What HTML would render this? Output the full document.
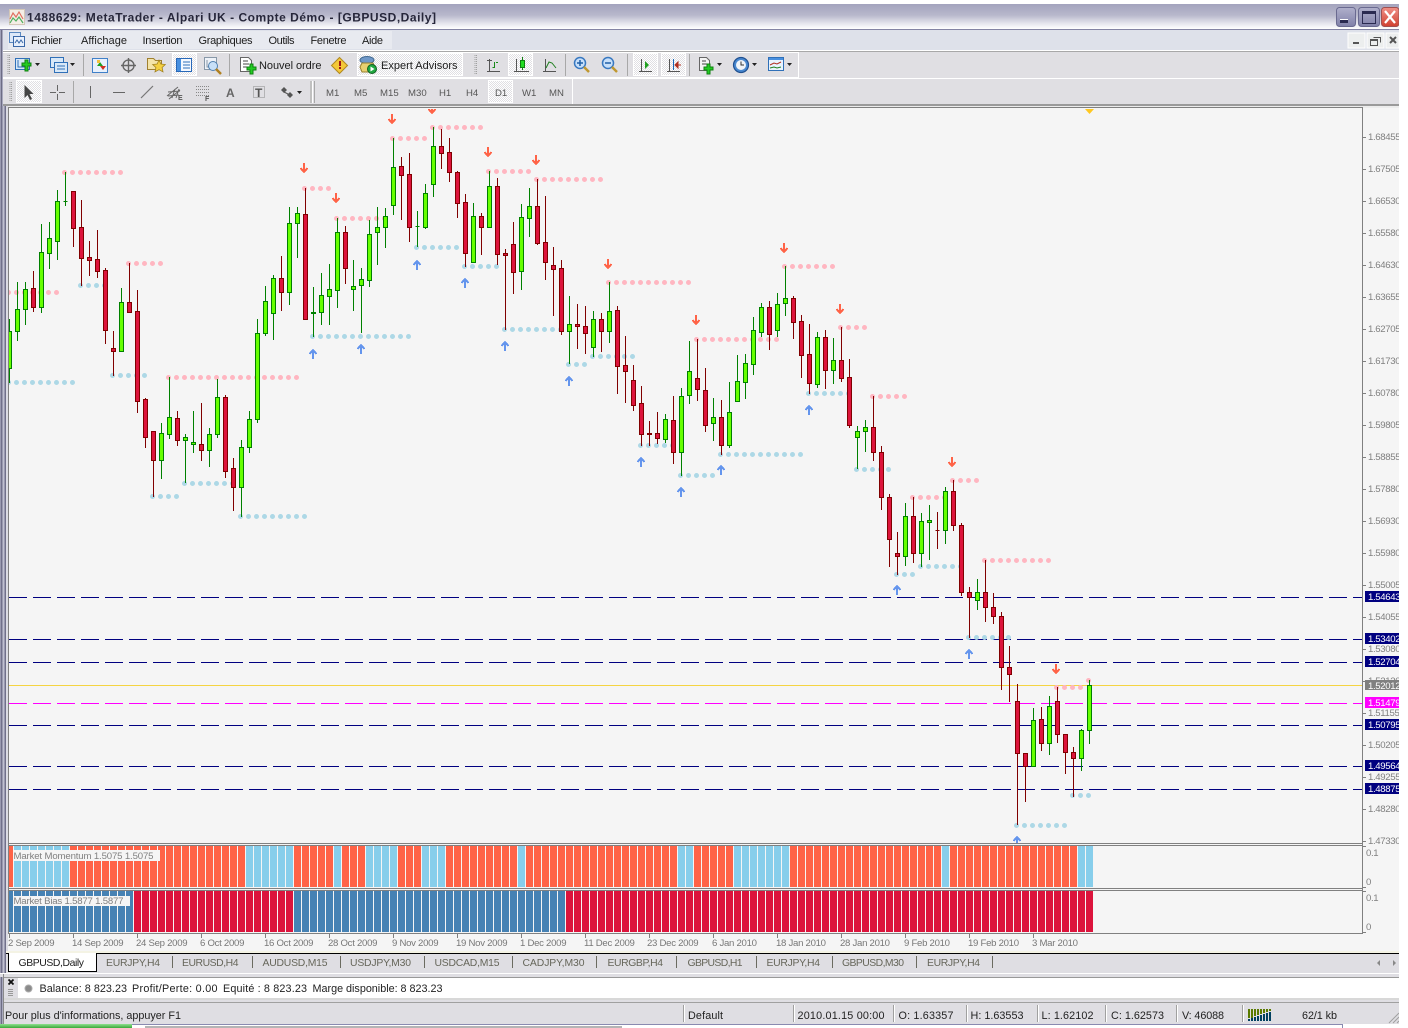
<!DOCTYPE html>
<html><head><meta charset="utf-8"><title>MetaTrader</title>
<style>
html,body{margin:0;padding:0;background:#fff;width:1408px;height:1028px;overflow:hidden}
svg{display:block;position:absolute;left:0;top:0}
text{font-family:"Liberation Sans",sans-serif;font-size:11px;fill:#1c1c1c;white-space:pre}
.ax{font-size:9.6px;fill:#808080;letter-spacing:-.35px}
.bx{font-size:9.6px;fill:#fff;letter-spacing:-.35px}
.dt{font-size:9.6px;fill:#777;letter-spacing:-.28px}
.tf{font-size:9.6px;fill:#555}
.tb{fill:#66665a;font-size:10.4px}
.st{font-size:10.8px;fill:#222}
.lb{font-size:9.6px;fill:#808080}
.ce{shape-rendering:crispEdges}
</style></head><body>
<svg width="1408" height="1028" viewBox="0 0 1408 1028" xmlns="http://www.w3.org/2000/svg">
<defs>
<linearGradient id="tg" x1="0" y1="0" x2="0" y2="1"><stop offset="0" stop-color="#a3a3bd"/><stop offset=".45" stop-color="#b8b8cc"/><stop offset=".8" stop-color="#e8e8ef"/><stop offset="1" stop-color="#fff"/></linearGradient>
<linearGradient id="bg" x1="0" y1="0" x2="0" y2="1"><stop offset="0" stop-color="#b0b0cc"/><stop offset="1" stop-color="#8080a8"/></linearGradient>
<linearGradient id="rg" x1="0" y1="0" x2="0" y2="1"><stop offset="0" stop-color="#f09088"/><stop offset="1" stop-color="#d04030"/></linearGradient>
<linearGradient id="gg" x1="0" y1="0" x2="0" y2="1"><stop offset="0" stop-color="#8fe08f"/><stop offset="1" stop-color="#3aa83a"/></linearGradient>
<pattern id="dp" width="2" height="2" patternUnits="userSpaceOnUse"><rect width="2" height="2" fill="#fff"/><rect width="1" height="1" fill="#e0dfe3"/><rect x="1" y="1" width="1" height="1" fill="#e0dfe3"/></pattern>
<clipPath id="cc"><rect x="9" y="109" width="1353" height="734"/></clipPath>
<clipPath id="c1"><rect x="9" y="846" width="1353" height="41"/></clipPath>
<clipPath id="c2"><rect x="9" y="891" width="1353" height="41"/></clipPath>
<clipPath id="ca"><rect x="1363" y="108" width="36" height="826"/></clipPath>
</defs>

<g class="ce">
<rect x="0" y="4" width="1399" height="1020" fill="#e0dfe3"/>
<rect x="0" y="4" width="1399" height="25" fill="url(#tg)"/>
<rect x="0" y="29" width="1399" height="1" fill="#8484a4"/>
<rect x="0" y="30" width="1399" height="20" fill="#dee1ea"/>
<rect x="8" y="31" width="384" height="18" fill="#e8eaf0"/>
<rect x="0" y="50" width="1399" height="1" fill="#fff"/>
<rect x="0" y="51" width="1399" height="1" fill="#a8a8a8"/>
<rect x="3" y="52" width="796" height="1" fill="#fff"/>
<rect x="3" y="77" width="796" height="1" fill="#fff"/>
<rect x="798" y="52" width="1" height="26" fill="#fff"/>
<rect x="0" y="78" width="1399" height="1" fill="#fff"/>
<rect x="572" y="79" width="1" height="25" fill="#fff"/>
<rect x="0" y="104" width="1399" height="2" fill="#9a9a9a"/>
<rect x="0" y="106" width="1399" height="2" fill="#ececec"/>
<rect x="0" y="30" width="1" height="994" fill="#a0a0b8"/>
<rect x="1" y="30" width="1" height="994" fill="#6d6d85"/>
<rect x="2" y="30" width="1" height="994" fill="#a8a8be"/>
<rect x="0" y="106" width="6" height="868" fill="#9a9ab0"/>
<rect x="1" y="106" width="1" height="868" fill="#70708a"/>
<rect x="3" y="106" width="1" height="868" fill="#c0c0d0"/>
<rect x="5" y="106" width="1" height="868" fill="#70708a"/>
<rect x="6" y="106" width="2" height="846" fill="#dcdce4"/>
<rect x="8" y="108" width="1391" height="843" fill="#f5f5f5"/>
<rect x="8" y="107" width="1355" height="1" fill="#808080"/>
<rect x="8" y="107" width="1" height="826" fill="#808080"/>
<rect x="1362" y="107" width="1" height="826" fill="#808080"/>
<rect x="8" y="843" width="1355" height="1" fill="#808080"/>
<rect x="8" y="845" width="1355" height="1" fill="#808080"/>
<rect x="8" y="888" width="1355" height="1" fill="#808080"/>
<rect x="8" y="890" width="1355" height="1" fill="#808080"/>
<rect x="8" y="933" width="1355" height="1" fill="#808080"/>
<rect x="6" y="951" width="1393" height="2" fill="#f4f3e4"/>
<rect x="6" y="953" width="1393" height="1" fill="#000"/>
<rect x="6" y="954" width="1393" height="19" fill="#dfdee3"/>
<rect x="0" y="973" width="1399" height="1" fill="#fff"/>
<rect x="0" y="974" width="1399" height="3" fill="#dfdee3"/>
<rect x="3" y="977" width="1396" height="1" fill="#999"/>
<rect x="3" y="978" width="15" height="20" fill="#dfdee3"/>
<rect x="18" y="978" width="1381" height="20" fill="#fff"/>
<rect x="3" y="998" width="1396" height="2" fill="#d8d8d8"/>
<rect x="3" y="1000" width="1396" height="3" fill="#dfdee3"/>
<rect x="3" y="1002" width="1396" height="1" fill="#a0a0a0"/>
<rect x="3" y="1003" width="1396" height="21" fill="#dfdee3"/>
<rect x="3" y="974" width="1" height="50" fill="#8a8a8a"/>
<rect x="0" y="1024" width="1408" height="4" fill="#fff"/>
<rect x="132" y="1024" width="1210" height="1" fill="#8a8ab0"/>
<rect x="0" y="1024" width="132" height="4" fill="url(#gg)"/>
<rect x="145" y="1026" width="477" height="2" fill="#b4b4b4"/>
<rect x="1342" y="1024" width="1" height="4" fill="#8a8ab0"/>
</g>

<!-- Title -->
<g>
<rect x="9.500" y="9.500" width="15" height="15" fill="#f4eee6" stroke="#d4c8b8"/>
<path d="M10 19l3-6 3 4 3-5 4 7" fill="none" stroke="#e07060" stroke-width="1.200"/>
<path d="M10 23l3-5 3 3 3-4 4 6" fill="none" stroke="#50b060" stroke-width="1.200"/>
<text x="27" y="21.500" textLength="409" style="font-size:12px;font-weight:bold;fill:#26263a">1488629: MetaTrader - Alpari UK - Compte Démo - [GBPUSD,Daily]</text>
<rect x="1336.500" y="7.500" width="19" height="19" rx="3" fill="url(#bg)" stroke="#6a6a90"/>
<rect x="1340" y="20" width="8" height="3" fill="#2a2a50"/><rect x="1340" y="19" width="8" height="1" fill="#fff"/>
<rect x="1358.500" y="7.500" width="21" height="19" rx="3" fill="url(#bg)" stroke="#6a6a90"/>
<rect x="1362.500" y="11.500" width="13" height="12" fill="none" stroke="#2a2a50"/><rect x="1363" y="12" width="12" height="2" fill="#2a2a50"/>
<rect x="1381.500" y="7.500" width="17.500" height="19" rx="3" fill="url(#rg)" stroke="#a05050"/>
<path d="M1385 11l10 12M1395 11l-10 12" stroke="#fff" stroke-width="2.2" fill="none"/>
</g>

<!-- Menu -->
<g>
<rect x="9.500" y="32.500" width="11" height="10" fill="#dce8f8" stroke="#5a88c0"/>
<rect x="13.500" y="36.500" width="11" height="10" fill="#e8f0fc" stroke="#3a68a8"/>
<path d="M15 43l2-3 2 3 2-3 2 3" fill="none" stroke="#3a68a8"/>
<text x="31" y="44" textLength="31">Fichier</text>
<text x="81" y="44" textLength="46">Affichage</text>
<text x="142.500" y="44" textLength="40">Insertion</text>
<text x="198.500" y="44" textLength="54">Graphiques</text>
<text x="268.500" y="44" textLength="26">Outils</text>
<text x="310.500" y="44" textLength="36">Fenetre</text>
<text x="362" y="44" textLength="21">Aide</text>
<rect x="1348" y="33" width="17" height="15" fill="#eceeee" stroke="#fff" class="ce"/>
<rect x="1353" y="42" width="6" height="2" fill="#555" class="ce"/>
<rect x="1367" y="33" width="17" height="15" fill="#eceeee" stroke="#fff" class="ce"/>
<path d="M1373.500 37.500h7v5M1370.500 39.500h7v6h-7z" fill="none" stroke="#555" class="ce"/><rect x="1371" y="39" width="7" height="2" fill="#555" class="ce"/>
<rect x="1386" y="33" width="13" height="15" fill="#eceeee" stroke="#fff" class="ce"/>
<path d="M1390 37l6 6M1396 37l-6 6" stroke="#555" stroke-width="2" fill="none"/>
</g>

<!-- Toolbar 1 -->
<g>
<path d="M8 55v20M9.500 55v20" stroke="#a0a0a0" stroke-dasharray="1 1" fill="none" class="ce"/>
<rect x="15.500" y="58.500" width="14" height="11" fill="#d8e8f8" stroke="#3070b8"/><path d="M18 60v7h9" fill="none" stroke="#3070b8"/>
<path d="M25 61h3v-3h3v3h3v3h-3v5h-3v-5h-3z" fill="#22cc22" stroke="#108010" transform="translate(-3,2)"/>
<path d="M35 63h5l-2.500 3z" fill="#222"/>
<rect x="50.500" y="57.500" width="13" height="10" fill="#d8e8f8" stroke="#3070b8"/><rect x="54.500" y="62.500" width="13" height="10" fill="#d8e8f8" stroke="#3070b8"/><path d="M57 66h8M57 69h8" stroke="#3070b8"/>
<path d="M70 63h5l-2.500 3z" fill="#222"/>
<rect x="83" y="54" width="1" height="22" fill="#a8a8a8" class="ce"/>
<rect x="92.500" y="58.500" width="15" height="14" fill="#e8f0fc" stroke="#4080c8"/><path d="M97 66l3-4 3 4z" fill="#20a020"/><path d="M100 70l3-4h-6z" fill="#d03020" transform="translate(3,0)"/><rect x="97" y="60" width="3" height="3" fill="#f0c040"/>
<circle cx="128.500" cy="65.500" r="5.500" fill="none" stroke="#666" stroke-width="1.400"/><path d="M128.500 58v15M121 65.500h15" stroke="#666" stroke-width="1.400"/>
<path d="M147.500 58.500h6l2 2h6v9h-14z" fill="#f4e4a8" stroke="#a08030"/>
<path d="M159 60l1.900 4 4.400.5-3.200 3 .9 4.400-4-2.200-4 2.200.9-4.400-3.200-3 4.400-.5z" fill="#f4d040" stroke="#a08020" stroke-width=".8"/>
<rect x="172.500" y="53.500" width="24" height="22" fill="url(#dp)" stroke="#fff"/>
<rect x="176.500" y="58.500" width="15" height="13" fill="#f4f8ff" stroke="#2868b8"/><rect x="177" y="59" width="4" height="12" fill="#4890e0"/><path d="M183 62h7M183 65h7M183 68h7" stroke="#3070b8"/>
<rect x="204.500" y="57.500" width="12" height="12" fill="#eef2f8" stroke="#8898a8"/><path d="M207 60v7h7" fill="none" stroke="#8898a8"/><circle cx="213" cy="66" r="4.500" fill="#c8e0f8" stroke="#5080b0"/><path d="M216 69l5 5" stroke="#b08020" stroke-width="2.500"/>
<rect x="229" y="54" width="1" height="22" fill="#a8a8a8" class="ce"/>
<path d="M240.500 57.500h8l3 3v11h-11z" fill="#fff" stroke="#666"/><path d="M243 61h5M243 64h6M243 67h6" stroke="#444"/>
<path d="M247 67h3v-3h3v3h3v3h-3v4h-3v-4h-3z" fill="#22cc22" stroke="#108010"/>
<text x="259" y="69" textLength="62.500">Nouvel ordre</text>
<path d="M339.500 57.500l8 8-8 8-8-8z" fill="#f4c838" stroke="#b08820"/><rect x="339" y="61" width="2" height="5" fill="#a01818"/><rect x="339" y="67" width="2" height="2" fill="#a01818"/>
<rect x="357.500" y="53.500" width="105" height="22" fill="url(#dp)" stroke="#fff"/>
<ellipse cx="367" cy="60" rx="7" ry="3.500" fill="#7098c8" stroke="#406890"/><path d="M362 63h11l2 4-2 5h-11l-2-5z" fill="#e8d070" stroke="#988030"/>
<circle cx="372" cy="69" r="4.500" fill="#20a840" stroke="#106020"/><path d="M370.500 66.500l4 2.500-4 2.500z" fill="#fff"/>
<text x="381" y="69" textLength="76.500">Expert Advisors</text>
<path d="M475 55v20M476.500 55v20" stroke="#a0a0a0" stroke-dasharray="1 1" fill="none" class="ce"/>
<path d="M487 71.500h13M489.500 59v13" stroke="#555" fill="none"/><path d="M487 60.500h5" stroke="#555"/><path d="M494.500 62v6M496 62.500h2M492.500 67.500h2" stroke="#1a8a1a" fill="none"/><path d="M498 71l2 .5-2 .5z" fill="#555"/>
<rect x="508.500" y="53.500" width="24" height="22" fill="url(#dp)" stroke="#fff"/>
<path d="M514 71.500h15M516.500 59v13" stroke="#555" fill="none"/>
<path d="M522.500 57v13" stroke="#108010"/><rect x="520.500" y="60.500" width="4" height="7" fill="#22dd22" stroke="#108010"/>
<path d="M543 71.500h13M545.500 59v13" stroke="#555" fill="none"/><path d="M546 68l3-6 3 1 4 5" fill="none" stroke="#208020"/>
<rect x="565" y="54" width="1" height="22" fill="#a8a8a8" class="ce"/>
<circle cx="580" cy="63" r="5.500" fill="#c8e0fa" stroke="#3878c0" stroke-width="1.500"/><path d="M577 63h6M580 60v6" stroke="#2060a8" stroke-width="1.500"/><path d="M584 67l5 5" stroke="#c09830" stroke-width="2.500"/>
<circle cx="608" cy="63" r="5.500" fill="#c8e0fa" stroke="#3878c0" stroke-width="1.500"/><path d="M605 63h6" stroke="#2060a8" stroke-width="1.500"/><path d="M612 67l5 5" stroke="#c09830" stroke-width="2.500"/>
<rect x="627" y="54" width="1" height="22" fill="#a8a8a8" class="ce"/>
<rect x="633.500" y="53.500" width="24" height="22" fill="url(#dp)" stroke="#fff"/>
<path d="M639 71.500h13M641.500 59v13" stroke="#555" fill="none"/><path d="M645 61l4 4-4 4z" fill="#20a020"/>
<rect x="661.500" y="53.500" width="24" height="22" fill="url(#dp)" stroke="#fff"/>
<path d="M667 71.500h13M669.500 59v13" stroke="#555" fill="none"/><path d="M673.500 59v11" stroke="#1868b8" fill="none"/><path d="M681 65h-5M678 62l-3 3 3 3z" fill="#b03020" stroke="#b03020"/>
<rect x="689" y="54" width="1" height="22" fill="#a8a8a8" class="ce"/>
<path d="M699.500 57.500h7l3 3v10h-10z" fill="#f4f4f4" stroke="#666"/><path d="M702 61h4M702 64h5" stroke="#444"/>
<path d="M704 67h3v-3h3v3h3v3h-3v4h-3v-4h-3z" fill="#22cc22" stroke="#108010"/>
<path d="M717 63h5l-2.500 3z" fill="#222"/>
<circle cx="741" cy="65" r="7.500" fill="#4888d0" stroke="#205090" stroke-width="1.200"/><circle cx="741" cy="65" r="5" fill="#f0f4f8"/><path d="M741 61.500V65h3" stroke="#333" fill="none"/>
<path d="M752 63h5l-2.500 3z" fill="#222"/>
<rect x="768.500" y="57.500" width="15" height="13" fill="#e8f4ff" stroke="#3070b8"/><rect x="769" y="58" width="14" height="2" fill="#4890e0"/><path d="M770 65l4-2 3 1 4-2" stroke="#b03020" fill="none"/><path d="M770 68l4-1 3 1 4-1" stroke="#208020" fill="none"/>
<path d="M787 63h5l-2.500 3z" fill="#222"/>
</g>

<!-- Toolbar 2 -->
<g>
<path d="M10 82v20M11.500 82v20" stroke="#a0a0a0" stroke-dasharray="1 1" fill="none" class="ce"/>
<rect x="16.500" y="80.500" width="25" height="22" fill="url(#dp)" stroke="#fff"/>
<path d="M24.500 85v13l3-3 2.500 5 2-1-2.500-5h4z" fill="#444"/>
<path d="M57.500 85v6M57.500 94v6M50 92.500h6M59 92.500h6" stroke="#666" class="ce"/>
<rect x="73" y="81" width="1" height="22" fill="#a8a8a8" class="ce"/>
<path d="M90.500 86v12" stroke="#666" class="ce"/>
<path d="M113 92.500h12" stroke="#666" class="ce"/>
<path d="M141 98l12-12" stroke="#777" stroke-width="1.200"/>
<path d="M167 96l11-9M169 99l11-9M172 98l3-9M176 98l3-9M168 92l12-1M168 96l11-1" stroke="#666" fill="none"/>
<text x="178" y="100" style="font-size:7px;font-weight:bold;fill:#555">E</text>
<path d="M196 86.500h13M196 89.500h13M196 92.500h13M196 95.500h13" stroke="#888" stroke-dasharray="1 1" class="ce"/>
<text x="205" y="101" style="font-size:7px;font-weight:bold;fill:#555">F</text>
<text x="226" y="97" style="font-size:12px;font-weight:bold;fill:#666">A</text>
<rect x="253.500" y="86.500" width="11" height="11" fill="none" stroke="#888" stroke-dasharray="1 1" class="ce"/>
<text x="255" y="97" style="font-size:12px;font-weight:bold;fill:#555">T</text>
<path d="M284 87l3 3-3 3-3-3z" fill="#555"/><path d="M290 92l3 3-3 3-3-3z" fill="#555"/><path d="M284 92l6 3" stroke="#555"/>
<path d="M297 91h5l-2.500 3z" fill="#222"/>
<rect x="310" y="81" width="2" height="22" fill="#c0c0c0" class="ce"/><rect x="312" y="81" width="1" height="22" fill="#fff" class="ce"/><rect x="314" y="81" width="1" height="22" fill="#a8a8a8" class="ce"/>
<text class="tf" x="326" y="96">M1</text><text class="tf" x="354" y="96">M5</text><text class="tf" x="380" y="96">M15</text><text class="tf" x="408" y="96">M30</text><text class="tf" x="439" y="96">H1</text><text class="tf" x="466" y="96">H4</text>
<rect x="488.500" y="80.500" width="24" height="22" fill="url(#dp)" stroke="#fff"/>
<text class="tf" x="495" y="96">D1</text><text class="tf" x="522" y="96">W1</text><text class="tf" x="549" y="96">MN</text>
</g>

<!-- Chart -->
<g clip-path="url(#cc)">
<g class="ce" fill="none" stroke-width="1">
<path d="M9 597.500H1362M9 639.500H1362M9 662.500H1362M9 725.500H1362M9 766.500H1362M9 789.500H1362" stroke="#000080" stroke-dasharray="18 6"/>
<path d="M9 703.500H1362" stroke="#ff00ff" stroke-dasharray="18 6"/>
</g>
<path class="ce" d="M9 685.500H1362" stroke="#f5d442" fill="none"/>
<g fill="none" stroke-width="5" stroke-linecap="round" stroke-dasharray="0 8">
<path stroke="#ffb6c1" d="M8.500 292.500H57M64.500 172.500H121M128.500 263.500H161M168.500 377.500H297M304.500 188.500H329M336.500 218.500H385M392.500 138.500H425M432.500 127.500H481M488.500 171.500H529M536.500 179.500H601M608.500 282.500H689M696.500 339.500H777M784.500 266.500H833M840.500 327.500H865M872.500 396.500H905M912.500 497.500H945M952.500 480.500H977M984.500 560.500H1049M1056.500 687.500H1081M1088.500 680.500h.1"/>
<path stroke="#add8e6" d="M8.500 382.500H73M80.500 285.500H105M112.500 375.500H145M152.500 496.500H177M184.500 483.500H233M240.500 516.500H305M312.500 336.500H409M416.500 247.500H457M464.500 266.500H497M504.500 329.500H561M568.500 364.500H585M592.500 356.500H633M640.500 445.500H673M680.500 475.500H713M720.500 454.500H801M808.500 393.500H849M856.500 469.500H889M896.500 574.500H913M920.500 566.500H961M968.500 637.500H1009M1016.500 825.500H1065M1072.500 795.500H1089"/>
</g>
<g class="ce" fill="none">
<path stroke="#008000" d="M9.500 319V383M17.500 282V341M25.500 282V325M41.500 224V313M49.500 222V269M57.500 190V260M65.500 172V206M121.500 288V351M161.500 423V479M169.500 377V439M185.500 434V483M193.500 411V453M209.500 428V467M217.500 379V438M241.500 440V517M249.500 411V453M257.500 319V423M265.500 286V336M273.500 275V340M289.500 207V305M297.500 207V258M313.500 287V337M321.500 273V325M329.500 264V325M337.500 218V308M353.500 260V311M361.500 268V333M369.500 220V287M377.500 207V265M385.500 208V248M393.500 138V215M417.500 211V247M425.500 184V229M433.500 127V197M473.500 203V262M489.500 171V228M521.500 204V290M529.500 188V237M569.500 296V364M593.500 311V357M609.500 282V343M665.500 414V443M681.500 388V476M689.500 341V404M713.500 398V441M729.500 382V448M737.500 355V401M745.500 354V399M753.500 317V375M761.500 303V337M777.500 293V337M785.500 266V316M817.500 332V388M833.500 338V384M857.500 426V469M865.500 420V452M905.500 503V566M921.500 513V567M929.500 505V560M945.500 487V544M977.500 579V610M1033.500 708V767M1049.500 696V755M1081.500 729V771M1089.500 680V744"/>
<path stroke="#800000" d="M33.500 271V312M73.500 191V247M81.500 200V286M89.500 241V276M97.500 230V278M105.500 268V344M113.500 331V376M129.500 263V312M137.500 290V413M145.500 398V448M153.500 431V497M177.500 411V446M201.500 403V461M225.500 395V478M233.500 458V511M281.500 256V311M305.500 188V320M345.500 226V284M401.500 157V220M409.500 153V242M441.500 129V169M449.500 138V182M457.500 171V218M465.500 194V267M481.500 213V255M497.500 178V265M505.500 249V330M513.500 222V294M537.500 179V245M545.500 196V280M553.500 247V316M561.500 260V335M577.500 304V349M585.500 306V354M601.500 313V352M617.500 306V394M625.500 336V403M633.500 365V411M641.500 386V446M649.500 421V446M657.500 412V444M673.500 396V464M697.500 339V401M705.500 368V432M721.500 400V455M769.500 301V350M793.500 296V339M801.500 315V378M809.500 324V394M825.500 330V389M841.500 327V382M849.500 359V428M873.500 396V461M881.500 446V510M889.500 494V567M897.500 532V575M913.500 497V563M937.500 512V549M953.500 480V531M961.500 523V596M969.500 587V638M985.500 560V622M993.500 593V624M1001.500 612V690M1009.500 646V702M1017.500 684V825M1025.500 753V802M1041.500 707V751M1057.500 687V743M1065.500 734V774M1073.500 747V797"/>
<path stroke="#008000" fill="#66ff00" d="M7.500 331.500h4v37h-4zM15.500 309.500h4v22h-4zM23.500 289.500h4v20h-4zM39.500 252.500h4v55h-4zM47.500 238.500h4v15h-4zM55.500 201.500h4v40h-4zM63.500 201.500h4zM119.500 302.500h4v49h-4zM159.500 433.500h4v27h-4zM167.500 417.500h4v17h-4zM183.500 437.500h4v3h-4zM191.500 442.500h4v2h-4zM207.500 434.500h4v16h-4zM215.500 397.500h4v37h-4zM239.500 447.500h4v40h-4zM247.500 419.500h4v28h-4zM255.500 333.500h4v86h-4zM263.500 301.500h4v32h-4zM271.500 278.500h4v35h-4zM287.500 223.500h4v69h-4zM295.500 213.500h4v10h-4zM311.500 312.500h4v1h-4zM319.500 295.500h4v17h-4zM327.500 289.500h4v7h-4zM335.500 232.500h4v58h-4zM351.500 286.500h4v3h-4zM359.500 279.500h4v6h-4zM367.500 234.500h4v46h-4zM375.500 227.500h4v5h-4zM383.500 216.500h4v11h-4zM391.500 167.500h4v38h-4zM415.500 226.500h4zM423.500 193.500h4v34h-4zM431.500 146.500h4v38h-4zM471.500 216.500h4v46h-4zM487.500 186.500h4v41h-4zM519.500 217.500h4v54h-4zM527.500 206.500h4v12h-4zM567.500 324.500h4v7h-4zM591.500 319.500h4v28h-4zM607.500 311.500h4v20h-4zM663.500 419.500h4v20h-4zM679.500 396.500h4v56h-4zM687.500 371.500h4v24h-4zM711.500 417.500h4v6h-4zM727.500 412.500h4v33h-4zM735.500 381.500h4v20h-4zM743.500 363.500h4v19h-4zM751.500 330.500h4v34h-4zM759.500 307.500h4v25h-4zM775.500 304.500h4v26h-4zM783.500 298.500h4v5h-4zM815.500 337.500h4v47h-4zM831.500 360.500h4v10h-4zM855.500 431.500h4v6h-4zM863.500 427.500h4v4h-4zM903.500 516.500h4v40h-4zM919.500 521.500h4v32h-4zM927.500 520.500h4v2h-4zM943.500 491.500h4v39h-4zM975.500 592.500h4v8h-4zM1031.500 720.500h4v46h-4zM1047.500 706.500h4v37h-4zM1079.500 730.500h4v28h-4zM1087.500 685.500h4v45h-4z"/>
<path stroke="#800000" fill="#dc143c" d="M31.500 288.500h4v19h-4zM71.500 191.500h4v37h-4zM79.500 227.500h4v31h-4zM87.500 257.500h4v3h-4zM95.500 259.500h4v12h-4zM103.500 270.500h4v60h-4zM111.500 348.500h4v3h-4zM127.500 302.500h4v10h-4zM135.500 311.500h4v90h-4zM143.500 399.500h4v38h-4zM151.500 431.500h4v29h-4zM175.500 418.500h4v22h-4zM199.500 444.500h4v6h-4zM223.500 397.500h4v74h-4zM231.500 468.500h4v19h-4zM279.500 278.500h4v14h-4zM303.500 214.500h4v105h-4zM343.500 232.500h4v36h-4zM399.500 166.500h4v9h-4zM407.500 174.500h4v53h-4zM439.500 146.500h4v7h-4zM447.500 152.500h4v20h-4zM455.500 172.500h4v31h-4zM463.500 202.500h4v51h-4zM479.500 216.500h4v11h-4zM495.500 186.500h4v68h-4zM503.500 253.500h4v2h-4zM511.500 244.500h4v28h-4zM535.500 206.500h4v37h-4zM543.500 242.500h4v20h-4zM551.500 265.500h4v4h-4zM559.500 268.500h4v63h-4zM575.500 324.500h4v2h-4zM583.500 326.500h4v7h-4zM599.500 319.500h4v12h-4zM615.500 310.500h4v56h-4zM623.500 365.500h4v6h-4zM631.500 380.500h4v25h-4zM639.500 403.500h4v31h-4zM647.500 433.500h4v1h-4zM655.500 433.500h4v5h-4zM671.500 420.500h4v32h-4zM695.500 378.500h4v11h-4zM703.500 390.500h4v35h-4zM719.500 417.500h4v28h-4zM767.500 307.500h4v27h-4zM791.500 298.500h4v24h-4zM799.500 321.500h4v34h-4zM807.500 354.500h4v29h-4zM823.500 337.500h4v33h-4zM839.500 360.500h4v18h-4zM847.500 377.500h4v48h-4zM871.500 427.500h4v25h-4zM879.500 452.500h4v45h-4zM887.500 497.500h4v42h-4zM895.500 553.500h4v3h-4zM911.500 516.500h4v37h-4zM935.500 530.500h4zM951.500 491.500h4v34h-4zM959.500 525.500h4v67h-4zM967.500 592.500h4v5h-4zM983.500 592.500h4v15h-4zM991.500 607.500h4v9h-4zM999.500 616.500h4v51h-4zM1007.500 667.500h4v7h-4zM1015.500 701.500h4v52h-4zM1023.500 753.500h4v13h-4zM1039.500 719.500h4v24h-4zM1055.500 701.500h4v33h-4zM1063.500 734.500h4v18h-4zM1071.500 752.500h4v6h-4z"/>
</g>
<g class="ce" fill="none" stroke-width="2">
<path stroke="#ff6347" d="M304 163v8M300.500 168l3.500 4 3.500-4M336 193v8M332.500 198l3.500 4 3.500-4M392 114v8M388.500 119l3.500 4 3.500-4M432 104v8M428.500 109l3.500 4 3.500-4M488 147v8M484.500 152l3.500 4 3.500-4M536 155v8M532.500 160l3.500 4 3.500-4M608 259v8M604.500 264l3.500 4 3.500-4M696 315v8M692.500 320l3.500 4 3.500-4M784 243v8M780.500 248l3.500 4 3.500-4M840 304v8M836.500 309l3.500 4 3.500-4M952 457v8M948.500 462l3.500 4 3.500-4M1056 664v8M1052.500 669l3.500 4 3.500-4"/>
<path stroke="#6495ed" d="M313 351v8M309.500 354l3.500-4 3.500 4M361 346v8M357.500 349l3.500-4 3.500 4M417 262v8M413.500 265l3.500-4 3.500 4M465 280v8M461.500 283l3.500-4 3.500 4M505 343v8M501.500 346l3.500-4 3.500 4M569 378v8M565.500 381l3.500-4 3.500 4M641 459v8M637.500 462l3.500-4 3.500 4M681 489v8M677.500 492l3.500-4 3.500 4M721 467v8M717.500 470l3.500-4 3.500 4M809 407v8M805.500 410l3.500-4 3.500 4M897 587v8M893.500 590l3.500-4 3.500 4M969 651v8M965.500 654l3.500-4 3.500 4M1017 838v8M1013.500 841l3.500-4 3.500 4"/>
</g>
<path d="M1085 109h9l-4.500 5z" fill="#ffc820"/>
</g>

<!-- Right axis -->
<g clip-path="url(#ca)">
<path class="ce" stroke="#808080" fill="none" d="M1363 137.500h3M1363 169.500h3M1363 201.500h3M1363 233.500h3M1363 265.500h3M1363 297.500h3M1363 329.500h3M1363 361.500h3M1363 393.500h3M1363 425.500h3M1363 457.500h3M1363 489.500h3M1363 521.500h3M1363 553.500h3M1363 585.500h3M1363 617.500h3M1363 649.500h3M1363 681.500h3M1363 713.500h3M1363 745.500h3M1363 777.500h3M1363 809.500h3M1363 841.500h3"/>
<text class="ax" x="1368" y="140">1.68455</text><text class="ax" x="1368" y="172">1.67505</text><text class="ax" x="1368" y="204">1.66530</text><text class="ax" x="1368" y="236">1.65580</text><text class="ax" x="1368" y="268">1.64630</text><text class="ax" x="1368" y="300">1.63655</text><text class="ax" x="1368" y="332">1.62705</text><text class="ax" x="1368" y="364">1.61730</text><text class="ax" x="1368" y="396">1.60780</text><text class="ax" x="1368" y="428">1.59805</text><text class="ax" x="1368" y="460">1.58855</text><text class="ax" x="1368" y="492">1.57880</text><text class="ax" x="1368" y="524">1.56930</text><text class="ax" x="1368" y="556">1.55980</text><text class="ax" x="1368" y="588">1.55005</text><text class="ax" x="1368" y="620">1.54055</text><text class="ax" x="1368" y="652">1.53080</text><text class="ax" x="1368" y="684">1.52130</text><text class="ax" x="1368" y="716">1.51155</text><text class="ax" x="1368" y="748">1.50205</text><text class="ax" x="1368" y="780">1.49255</text><text class="ax" x="1368" y="812">1.48280</text><text class="ax" x="1368" y="844">1.47330</text>
<g class="ce">
<rect x="1365" y="591" width="34" height="11" fill="#000080"/>
<rect x="1365" y="633" width="34" height="11" fill="#000080"/>
<rect x="1365" y="656" width="34" height="11" fill="#000080"/>
<rect x="1365" y="680" width="34" height="10" fill="#808080"/>
<rect x="1365" y="697" width="34" height="11" fill="#ff00ff"/>
<rect x="1365" y="719" width="34" height="11" fill="#000080"/>
<rect x="1365" y="760" width="34" height="11" fill="#000080"/>
<rect x="1365" y="783" width="34" height="11" fill="#000080"/>
</g>
<text class="bx" x="1368" y="600">1.54643</text><text class="bx" x="1368" y="642">1.53402</text><text class="bx" x="1368" y="665">1.52704</text><text class="bx" x="1368" y="689">1.52012</text><text class="bx" x="1368" y="706">1.51479</text><text class="bx" x="1368" y="728">1.50795</text><text class="bx" x="1368" y="769">1.49564</text><text class="bx" x="1368" y="792">1.48875</text>
</g>

<!-- Sub windows -->
<g class="ce" fill="none" stroke-dasharray="7 1" stroke-width="41">
<g clip-path="url(#c1)">
<path stroke="#ff6347" d="M6 866.500H14M70 866.500H246M294 866.500H334M342 866.500H366M398 866.500H422M446 866.500H518M526 866.500H678M694 866.500H734M790 866.500H942M950 866.500H1078"/>
<path stroke="#87ceeb" d="M14 866.500H70M246 866.500H294M334 866.500H342M366 866.500H398M422 866.500H446M518 866.500H526M678 866.500H694M734 866.500H790M942 866.500H950M1078 866.500H1094"/>
</g>
<g clip-path="url(#c2)">
<path stroke="#4682b4" d="M6 911.500H134M294 911.500H566"/>
<path stroke="#dc143c" d="M134 911.500H294M566 911.500H1094"/>
</g>
</g>
<rect class="ce" x="13" y="850" width="147" height="11" fill="#f5f5f5"/>
<rect class="ce" x="13" y="896" width="117" height="10" fill="#f5f5f5"/>
<text class="lb" x="13.500" y="859" textLength="140">Market Momentum 1.5075 1.5075</text>
<text class="lb" x="13.500" y="904" textLength="110">Market Bias 1.5877 1.5877</text>
<path class="ce" stroke="#808080" fill="none" d="M1363 846.500h3M1363 887.500h3M1363 891.500h3M1363 932.500h3"/>
<text class="ax" x="1366" y="856">0.1</text><text class="ax" x="1366" y="885">0</text><text class="ax" x="1366" y="901">0.1</text><text class="ax" x="1366" y="930">0</text>

<!-- Dates -->
<path class="ce" stroke="#808080" fill="none" d="M9.500 934v4M73.500 934v4M137.500 934v4M201.500 934v4M265.500 934v4M329.500 934v4M393.500 934v4M457.500 934v4M521.500 934v4M585.500 934v4M649.500 934v4M713.500 934v4M777.500 934v4M841.500 934v4M905.500 934v4M969.500 934v4M1033.500 934v4"/>
<text class="dt" x="8" y="946">2 Sep 2009</text><text class="dt" x="72" y="946">14 Sep 2009</text><text class="dt" x="136" y="946">24 Sep 2009</text><text class="dt" x="200" y="946">6 Oct 2009</text><text class="dt" x="264" y="946">16 Oct 2009</text><text class="dt" x="328" y="946">28 Oct 2009</text><text class="dt" x="392" y="946">9 Nov 2009</text><text class="dt" x="456" y="946">19 Nov 2009</text><text class="dt" x="520" y="946">1 Dec 2009</text><text class="dt" x="584" y="946">11 Dec 2009</text><text class="dt" x="647" y="946">23 Dec 2009</text><text class="dt" x="712" y="946">6 Jan 2010</text><text class="dt" x="776" y="946">18 Jan 2010</text><text class="dt" x="840" y="946">28 Jan 2010</text><text class="dt" x="904" y="946">9 Feb 2010</text><text class="dt" x="968" y="946">19 Feb 2010</text><text class="dt" x="1032" y="946">3 Mar 2010</text>

<!-- Tabs -->
<g>
<rect class="ce" x="8" y="953" width="88" height="18" fill="#fff"/>
<path class="ce" d="M8.500 953v18.500h88V953" fill="none" stroke="#000"/>
<text x="18.500" y="966" textLength="65.500" style="fill:#1c1c1c;font-size:10.4px">GBPUSD,Daily</text>
<text class="tb" x="106" y="966" textLength="54">EURJPY,H4</text>
<text class="tb" x="182" y="966" textLength="56.500">EURUSD,H4</text>
<text class="tb" x="262.500" y="966" textLength="65">AUDUSD,M15</text>
<text class="tb" x="350" y="966" textLength="61">USDJPY,M30</text>
<text class="tb" x="434.500" y="966" textLength="65">USDCAD,M15</text>
<text class="tb" x="522.500" y="966" textLength="62">CADJPY,M30</text>
<text class="tb" x="607.500" y="966" textLength="55.500">EURGBP,H4</text>
<text class="tb" x="687.500" y="966" textLength="55">GBPUSD,H1</text>
<text class="tb" x="766.500" y="966" textLength="53.500">EURJPY,H4</text>
<text class="tb" x="842" y="966" textLength="62">GBPUSD,M30</text>
<text class="tb" x="927" y="966" textLength="53">EURJPY,H4</text>
<path class="ce" stroke="#6b6b60" fill="none" d="M172.500 956v12M252.500 956v12M340.500 956v12M424.500 956v12M512.500 956v12M596.500 956v12M676.500 956v12M756.500 956v12M832.500 956v12M916.500 956v12M992.500 956v12"/>
<path d="M1380 960v6l-3-3z" fill="#888"/><path d="M1393 960v6l3-3z" fill="#888"/>
</g>

<!-- Terminal -->
<g>
<path d="M8.500 979.500l5 5M13.500 979.500l-5 5" stroke="#111" stroke-width="1.800"/>
<path class="ce" d="M8 989.500h5M8 991.500h5M8 993.500h5M8 995.500h5" stroke="#999"/>
<circle cx="28.500" cy="988.500" r="3.500" fill="#8a8a8a" stroke="#aaa"/>
<text class="st" x="39.500" y="992" textLength="87.500">Balance: 8 823.23</text>
<text class="st" x="132" y="992" textLength="85.500">Profit/Perte: 0.00</text>
<text class="st" x="223" y="992" textLength="84">Equité : 8 823.23</text>
<text class="st" x="312.500" y="992" textLength="130">Marge disponible: 8 823.23</text>
</g>

<!-- Status -->
<g>
<text class="st" x="5" y="1019" textLength="176">Pour plus d'informations, appuyer F1</text>
<text class="st" x="688" y="1019" textLength="35">Default</text>
<text class="st" x="797.500" y="1019" textLength="87">2010.01.15 00:00</text>
<text class="st" x="898.500" y="1019" textLength="55">O: 1.63357</text>
<text class="st" x="970.500" y="1019" textLength="53">H: 1.63553</text>
<text class="st" x="1041.500" y="1019" textLength="52">L: 1.62102</text>
<text class="st" x="1111" y="1019" textLength="53">C: 1.62573</text>
<text class="st" x="1182" y="1019" textLength="42">V: 46088</text>
<text class="st" x="1302" y="1019" textLength="35">62/1 kb</text>
<g class="ce">
<path d="M683.500 1005v17M793.500 1005v17M893.500 1005v17M966.500 1005v17M1037.500 1005v17M1105.500 1005v17M1176.500 1005v17M1242.500 1005v17" stroke="#a0a0a0" fill="none"/>
<path d="M684.500 1005v17M794.500 1005v17M894.500 1005v17M967.500 1005v17M1038.500 1005v17M1106.500 1005v17M1177.500 1005v17M1243.500 1005v17" stroke="#fff" fill="none"/>
<rect x="1248" y="1009" width="2" height="9" fill="#5a7a00"/><rect x="1248" y="1019" width="2" height="2" fill="#004060"/>
<rect x="1251" y="1009" width="2" height="9" fill="#5a7a00"/><rect x="1251" y="1018" width="2" height="3" fill="#004060"/>
<rect x="1254" y="1009" width="2" height="7" fill="#5a7a00"/><rect x="1254" y="1017" width="2" height="4" fill="#004060"/>
<rect x="1257" y="1009" width="2" height="6" fill="#5a7a00"/><rect x="1257" y="1016" width="2" height="5" fill="#004060"/>
<rect x="1260" y="1009" width="2" height="5" fill="#5a7a00"/><rect x="1260" y="1015" width="2" height="6" fill="#004060"/>
<rect x="1263" y="1009" width="2" height="4" fill="#5a7a00"/><rect x="1263" y="1014" width="2" height="7" fill="#004060"/>
<rect x="1266" y="1009" width="2" height="3" fill="#5a7a00"/><rect x="1266" y="1013" width="2" height="8" fill="#004060"/>
<rect x="1269" y="1009" width="2" height="2" fill="#5a7a00"/><rect x="1269" y="1012" width="2" height="9" fill="#004060"/>
</g>
<path d="M1389 1023l10-10M1393 1023l6-6M1397 1023l2-2" stroke="#a0a0a0" fill="none"/>
</g>

<rect x="1399" y="0" width="9" height="1028" fill="#fff"/>
</svg>
</body></html>
